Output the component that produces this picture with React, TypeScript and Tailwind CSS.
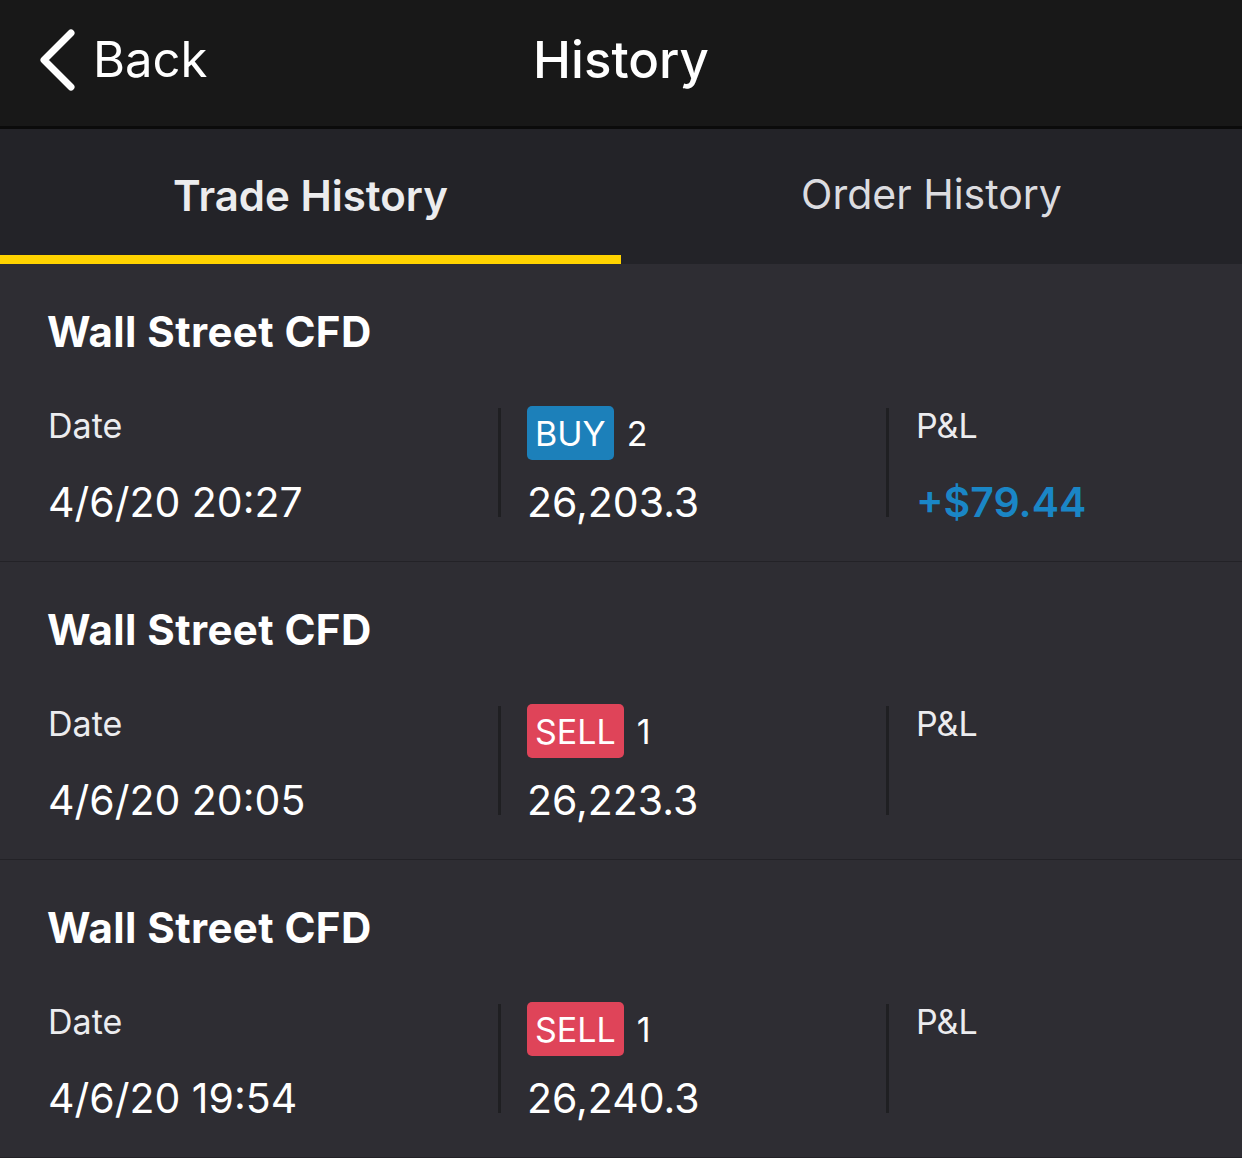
import React, { FC } from "react";

type Trade = {
  id: number;
  name: string;
  date: string;
  side: "BUY" | "SELL";
  qty: number;
  price: string;
  pnl?: string;
};

const trades: Trade[] = [
  { id: 1, name: "Wall Street CFD", date: "4/6/20 20:27", side: "BUY", qty: 2, price: "26,203.3", pnl: "+$79.44" },
  { id: 2, name: "Wall Street CFD", date: "4/6/20 20:05", side: "SELL", qty: 1, price: "26,223.3" },
  { id: 3, name: "Wall Street CFD", date: "4/6/20 19:54", side: "SELL", qty: 1, price: "26,240.3" },
];

const font = { fontFamily: "Inter, 'Noto Sans', sans-serif" };

const TradeRow: FC<{ trade: Trade }> = ({ trade }) => {
  return (
    <div className="h-[298px] border-b border-[#232227] pl-[47px] pt-[44px]">
      <h2 className="text-[42px] leading-[48px] font-bold text-white tracking-[0.4px]">
        {trade.name}
      </h2>
      <div className="mt-[50px] flex">
        <div className="w-[451px] pl-[1px]">
          <div className="h-[54px] text-[34px] leading-[40px] text-[#ececef]">Date</div>
          <div className="mt-[18px] text-[41px] leading-[48px] text-white">{trade.date}</div>
        </div>
        <div className="mt-[2px] h-[109px] w-[3px] bg-[#1f1f22]" />
        <div className="w-[385px] pl-[26px]">
          <div className="flex h-[54px] items-center">
            <span
              className={
                trade.side === "BUY"
                  ? "flex h-[54px] items-center rounded-[5px] bg-[#1c80ba] px-[8px] text-[34px] text-white"
                  : "flex h-[54px] items-center rounded-[5px] bg-[#df4459] px-[8px] text-[34px] text-white"
              }
            >
              {trade.side}
            </span>
            <span className="ml-[13px] text-[34px] text-white">{trade.qty}</span>
          </div>
          <div className="mt-[18px] text-[41px] leading-[48px] text-white">{trade.price}</div>
        </div>
        <div className="mt-[2px] h-[109px] w-[3px] bg-[#1f1f22]" />
        <div className="pl-[27px]">
          <div className="h-[54px] text-[34px] leading-[40px] text-[#ececef]">P&amp;L</div>
          {trade.pnl && (
            <div className="mt-[18px] text-[41px] leading-[48px] font-semibold text-[#1a86c6]">
              {trade.pnl}
            </div>
          )}
        </div>
      </div>
    </div>
  );
};

const App: FC = () => {
  return (
    <div className="w-[1242px] h-[1158px] overflow-hidden bg-[#2e2d33]" style={font}>
      <header className="relative flex h-[126px] items-center bg-[#181818] pb-[6px]">
        <div className="flex items-center pl-[38px]">
          <svg width="40" height="64" viewBox="0 0 40 64" fill="none">
            <path
              d="M33 5 L6 32 L33 59"
              stroke="white"
              strokeWidth="7"
              strokeLinecap="round"
              strokeLinejoin="round"
            />
          </svg>
          <span className="ml-[15px] text-[49px] text-white">Back</span>
        </div>
        <h1 className="absolute left-0 right-0 text-center text-[51px] font-medium text-white">
          History
        </h1>
      </header>
      <div className="h-[3px] bg-[#0b0b0b]" />
      <nav className="flex h-[135px] bg-[#232328]">
        <div className="flex w-[621px] flex-col">
          <div className="flex flex-1 items-center justify-center pt-[6px] text-[42px] font-semibold text-[#ececee]">
            Trade History
          </div>
          <div className="h-[9px] bg-[#ffd300]" />
        </div>
        <div className="flex flex-1 flex-col">
          <div className="flex flex-1 items-center justify-center pt-[6px] text-[41px] text-[#dcdce0]">
            Order History
          </div>
          <div className="h-[9px]" />
        </div>
      </nav>
      {trades.map((t) => (
        <TradeRow key={t.id} trade={t} />
      ))}
    </div>
  );
};

export default App;
